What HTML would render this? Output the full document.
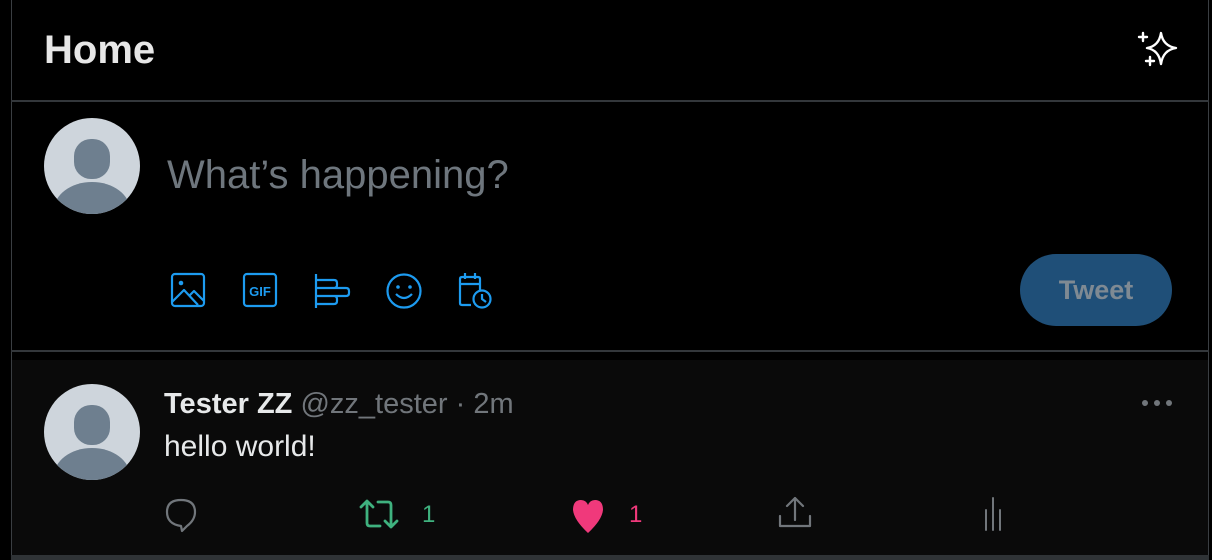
<!DOCTYPE html>
<html><head><meta charset="utf-8"><style>
*{margin:0;padding:0;box-sizing:border-box}
body{width:1212px;height:560px;background:#000;position:relative;overflow:hidden;font-family:"Liberation Sans",sans-serif}
.abs{position:absolute}
</style></head><body>
<div class="abs" style="left:11px;top:0;width:1px;height:560px;background:#3a3e42"></div>
<div class="abs" style="left:1208px;top:0;width:1px;height:560px;background:#3a3e42"></div>
<div class="abs" style="left:11px;top:100px;width:1198px;height:2px;background:#33373b"></div>
<div class="abs" style="left:11px;top:350px;width:1198px;height:2px;background:#33373b"></div>
<div class="abs" style="left:12px;top:360px;width:1196px;height:195px;background:#0a0a0a"></div>
<div class="abs" style="left:11px;top:555px;width:1198px;height:5px;background:#2f3336"></div>

<div class="abs" style="left:44px;top:27px;font-size:40px;font-weight:bold;color:#e7e7e7;line-height:46px">Home</div>
<svg class="abs" style="left:1136px;top:30px" width="44" height="40" viewBox="0 0 44 40" fill="none" stroke="#fff" stroke-width="2.4" stroke-linecap="round" stroke-linejoin="round">
<path d="M25 3 Q27 16 40 18 Q27 20 25 34 Q23 20 11 18 Q23 16 25 3Z"/>
<path d="M7 3v8M3 7h8M14 27v8M10 31h8"/></svg>

<svg class="abs" style="left:44px;top:118px" width="96" height="96" viewBox="0 0 96 96"><defs><clipPath id="c1"><circle cx="48" cy="48" r="48"/></clipPath></defs><circle cx="48" cy="48" r="48" fill="#ced5dc"/><g clip-path="url(#c1)" fill="#6e7f8f"><rect x="30" y="21" width="36" height="40" rx="17"/><ellipse cx="48" cy="92" rx="38" ry="28"/></g></svg>
<div class="abs" style="left:167px;top:151px;font-size:40px;color:#6e767d;line-height:48px">What’s happening?</div>

<svg class="abs" style="left:170px;top:272px" width="330" height="38" viewBox="0 0 330 38" fill="none" stroke="#1d9bf0" stroke-width="2.2" stroke-linejoin="round">
<rect x="2" y="2" width="32" height="32" rx="3"/><circle cx="11" cy="11" r="2.3" fill="#1d9bf0" stroke="none"/><path d="M2 30 L14 18 L28 33 M19 24 L24 19 L34 29"/>
<rect x="74" y="2" width="32" height="32" rx="3"/><text x="90" y="24" text-anchor="middle" font-family="Liberation Sans" font-weight="bold" font-size="13" fill="#1d9bf0" stroke="none">GIF</text>
<path d="M146 2 V36 M146 8 H164 Q167 8 167 11 V13 Q167 16 164 16 H146 M146 16 H176 Q179 16 179 19 V21 Q179 24 176 24 H146 M146 24 H164 Q167 24 167 27 V29 Q167 32 164 32 H146"/>
<circle cx="234" cy="19" r="16.5"/><circle cx="228" cy="15" r="1.8" fill="#1d9bf0" stroke="none"/><circle cx="240" cy="15" r="1.8" fill="#1d9bf0" stroke="none"/><path d="M226 22 Q234 30 242 22"/>
<path d="M310 19 V7 Q310 5 308 5 H292 Q290 5 290 7 V31 Q290 33 292 33 H301 M290 12 H310 M295 1 V7 M305 1 V7"/><circle cx="312" cy="27" r="8.5"/><path d="M312 22 V27 L316 30"/>
</svg>
<div class="abs" style="left:1020px;top:254px;width:152px;height:72px;border-radius:36px;background:#1f4f78;color:#7f8a93;font-weight:bold;font-size:27px;text-align:center;line-height:72px">Tweet</div>

<svg class="abs" style="left:44px;top:384px" width="96" height="96" viewBox="0 0 96 96"><defs><clipPath id="c2"><circle cx="48" cy="48" r="48"/></clipPath></defs><circle cx="48" cy="48" r="48" fill="#ced5dc"/><g clip-path="url(#c2)" fill="#6e7f8f"><rect x="30" y="21" width="36" height="40" rx="17"/><ellipse cx="48" cy="92" rx="38" ry="28"/></g></svg>
<div class="abs" style="left:164px;top:387px;font-size:29px;line-height:34px;white-space:nowrap"><b style="color:#e7e9ea">Tester ZZ</b> <span style="color:#71767b">@zz_tester · 2m</span></div>
<div class="abs" style="left:164px;top:429px;font-size:30px;line-height:36px;color:#e7e9ea">hello world!</div>
<svg class="abs" style="left:1140px;top:396px" width="34" height="14"><circle cx="5" cy="7" r="3" fill="#71767b"/><circle cx="17" cy="7" r="3" fill="#71767b"/><circle cx="29" cy="7" r="3" fill="#71767b"/></svg>

<svg class="abs" style="left:150px;top:490px" width="870" height="50" viewBox="0 0 870 50" fill="none" stroke-width="2.2" stroke-linejoin="round" stroke-linecap="round">
<path stroke="#71767b" d="M31 36 Q17 34 17 22 Q17 10 31 10 Q45 10 45 22 Q45 30 37 36 L32 41 Z"/>
<path stroke="#3fb27f" stroke-width="2.8" d="M230 36 H220 Q217 36 217 33 V11 M211 17 L217 11 L223 17 M228 12 H238 Q241 12 241 15 V37 M235 31 L241 37 L247 31"/>
<text x="272" y="32" font-family="Liberation Sans" font-size="24" fill="#3fb27f" stroke="none">1</text>
<path fill="#f0397b" stroke="none" d="M438 43 Q424 30 423 20 Q423 10 431 10 Q436 10 438 15 Q440 10 445 10 Q453 10 453 20 Q452 30 438 43Z"/>
<text x="479" y="32" font-family="Liberation Sans" font-size="24" fill="#f0397b" stroke="none">1</text>
<path stroke="#71767b" d="M645 8 V30 M637 16 L645 8 L653 16 M630 26 V36 H660 V26"/>
<path stroke="#71767b" d="M836 20 V40 M843 8 V40 M850 20 V40" stroke-width="2"/>
</svg>
</body></html>
